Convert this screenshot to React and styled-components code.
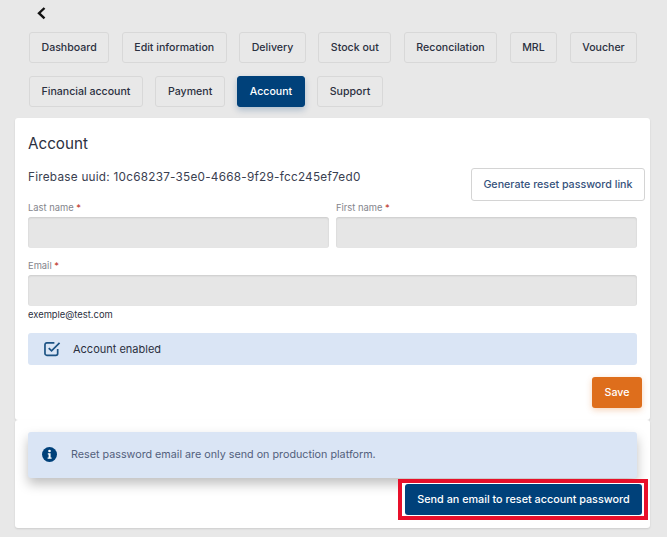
import styled, { createGlobalStyle } from 'styled-components';

const GlobalStyle = createGlobalStyle`
    html, body {
        margin: 0;
        padding: 0;
        background: #e8e8e8;
        font-family: "Inter", "Liberation Sans", sans-serif;
    }
    * { box-sizing: border-box; }
`;

const Page = styled.div`
    width: 667px;
    height: 537px;
    overflow: hidden;
    padding: 0 17px 0 15px;
`;

const BackButton = styled.div`
    height: 32px;
    padding: 7px 0 0 22px;
    svg { display: block; }
`;

const Tabs = styled.div`
    display: flex;
    flex-wrap: wrap;
    column-gap: 12.5px;
    row-gap: 13px;
    padding-left: 14px;
    width: 630px;
`;

const Tab = styled.div`
    height: 31px;
    padding: 0 11.5px;
    display: flex;
    align-items: center;
    border-radius: 3px;
    font-size: 10.6px;
    font-weight: 500;
    white-space: nowrap;
    border: 1px solid ${(p) => (p.$active ? '#00417a' : '#d8d8d8')};
    background: ${(p) => (p.$active ? '#00417a' : '#e8e8e8')};
    color: ${(p) => (p.$active ? '#fff' : '#2b3040')};
    box-shadow: ${(p) => (p.$active ? '0 3px 6px rgba(0, 65, 122, 0.25)' : 'none')};
`;

const Card = styled.section`
    background: #fff;
    border-radius: 3px;
    box-shadow: 0 1px 2px rgba(0, 0, 0, 0.12);
`;

const AccountCard = styled(Card)`
    margin-top: 11px;
    height: 302px;
    padding: 16px 13px 0;
`;

const ResetCard = styled(Card)`
    height: 108px;
    padding: 12px 13px 0;
`;

const Title = styled.h2`
    margin: 0;
    font-size: 15.2px;
    line-height: 20px;
    font-weight: 400;
    color: #2b3040;
`;

const UuidRow = styled.div`
    display: flex;
    justify-content: space-between;
    margin-top: 14px;
    margin-right: -8px;
`;

const Uuid = styled.div`
    font-size: 11.75px;
    line-height: 18px;
    letter-spacing: 0.25px;
    color: #3a4050;
`;

const LinkButton = styled.div`
    height: 33px;
    padding: 0 11.5px;
    display: flex;
    align-items: center;
    border: 1px solid #d4d4d4;
    border-radius: 3px;
    font-size: 10.7px;
    font-weight: 500;
    color: #35527c;
    background: #fff;
`;

const NameRow = styled.div`
    display: grid;
    grid-template-columns: 301px 301px;
    column-gap: 7px;
`;

const Field = styled.div`
    display: flex;
    flex-direction: column;
`;

const Label = styled.label`
    font-size: 9.4px;
    line-height: 12px;
    color: #83858c;
    margin: 1px 0 3px;
    span { color: #c0392b; }
`;

const Input = styled.div`
    height: 31px;
    width: 100%;
    background: #e6e6e6;
    border-radius: 3px;
    box-shadow: inset 0 1px 2px rgba(0, 0, 0, 0.12);
`;

const EmailField = styled(Field)`
    margin-top: 11px;
`;

const Hint = styled.div`
    font-size: 9.4px;
    line-height: 12px;
    margin: 3px 0 -1px;
    color: #2b3040;
`;

const Banner = styled.div`
    display: flex;
    align-items: center;
    background: #dae5f5;
    border-radius: 3px;
`;

const EnabledBanner = styled(Banner)`
    height: 32px;
    margin-top: 13px;
    padding-left: 16px;
    gap: 12px;
    font-size: 11px;
    color: #2b3040;
`;

const InfoBanner = styled(Banner)`
    height: 46px;
    padding: 0 0 2px 14px;
    gap: 14px;
    font-size: 10.75px;
    color: #52607c;
    box-shadow: 0 6px 12px rgba(0, 0, 0, 0.25);
`;

const Actions = styled.div`
    display: flex;
    justify-content: flex-end;
`;

const SaveActions = styled(Actions)`
    margin-right: -5px;
`;

const SaveButton = styled.div`
    height: 31px;
    width: 50px;
    margin-top: 12px;
    display: flex;
    align-items: center;
    justify-content: center;
    background: #de6e1c;
    border-radius: 3px;
    font-size: 10.7px;
    font-weight: 500;
    color: #fff;
    box-shadow: 0 2px 6px rgba(222, 110, 28, 0.3);
`;

const Highlight = styled.div`
    margin: 1px -11px 0 0;
    border: 4px solid #e8102a;
    padding: 1px 2px 1px 3px;
    background: #fff;
`;

const SendButton = styled.div`
    height: 31px;
    width: 237px;
    display: flex;
    align-items: center;
    justify-content: center;
    background: #00417a;
    border-radius: 3px;
    font-size: 10.8px;
    font-weight: 500;
    color: #fff;
    white-space: nowrap;
`;

const tabs = [
    'Dashboard', 'Edit information', 'Delivery', 'Stock out', 'Reconcilation',
    'MRL', 'Voucher', 'Financial account', 'Payment', 'Account', 'Support',
];

export default function App() {
    return (
        <>
            <GlobalStyle />
            <Page>
                <BackButton>
                    <svg width="9" height="13" viewBox="0 0 9 13" fill="none">
                        <path d="M7.5 1 2 6.2 7.5 11.4" stroke="#111" strokeWidth="2.4" />
                    </svg>
                </BackButton>
                <Tabs>
                    {tabs.map((tab) => (
                        <Tab key={tab} $active={tab === 'Account'}>{tab}</Tab>
                    ))}
                </Tabs>
                <AccountCard>
                    <Title>Account</Title>
                    <UuidRow>
                        <Uuid>Firebase uuid: 10c68237-35e0-4668-9f29-fcc245ef7ed0</Uuid>
                        <LinkButton>Generate reset password link</LinkButton>
                    </UuidRow>
                    <NameRow>
                        <Field>
                            <Label>Last name <span>*</span></Label>
                            <Input />
                        </Field>
                        <Field>
                            <Label>First name <span>*</span></Label>
                            <Input />
                        </Field>
                    </NameRow>
                    <EmailField>
                        <Label>Email <span>*</span></Label>
                        <Input />
                        <Hint>exemple@test.com</Hint>
                    </EmailField>
                    <EnabledBanner>
                        <svg width="17" height="16" viewBox="0 0 18 17" fill="none" stroke="#1c5384" strokeWidth="1.8">
                            <path d="M14.5 8.5v4.7a2 2 0 0 1-2 2H3a2 2 0 0 1-2-2V4a2 2 0 0 1 2-2h8" />
                            <path d="M5 7.5l3 3 8.5-8.5" />
                        </svg>
                        Account enabled
                    </EnabledBanner>
                    <SaveActions>
                        <SaveButton>Save</SaveButton>
                    </SaveActions>
                </AccountCard>
                <ResetCard>
                    <InfoBanner>
                        <svg width="15" height="15" viewBox="0 0 15 15">
                            <circle cx="7.5" cy="7.5" r="7.5" fill="#00417a" />
                            <circle cx="7.5" cy="4" r="1.3" fill="#fff" />
                            <path d="M5.8 6.2h2.8v4.3h1v1.3H5.6v-1.3h1V7.5h-.8z" fill="#fff" />
                        </svg>
                        Reset password email are only send on production platform.
                    </InfoBanner>
                    <Actions>
                        <Highlight>
                            <SendButton>Send an email to reset account password</SendButton>
                        </Highlight>
                    </Actions>
                </ResetCard>
            </Page>
        </>
    );
}
